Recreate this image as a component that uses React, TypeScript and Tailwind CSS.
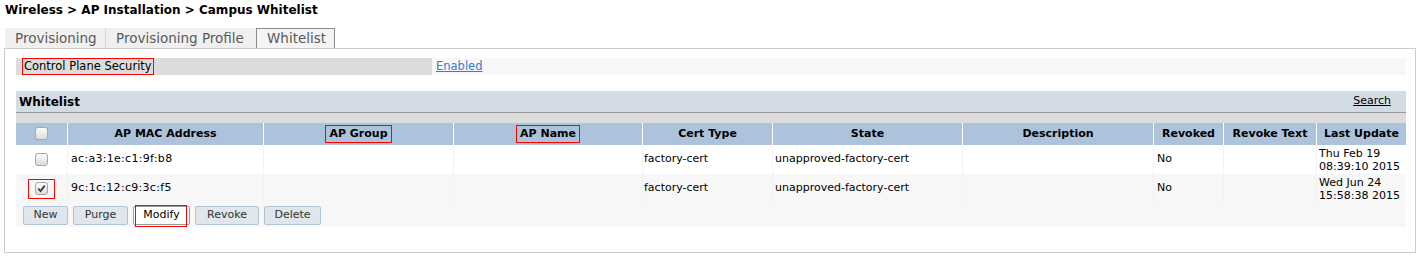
const FONT = { fontFamily: '"DejaVu Sans", Verdana, sans-serif' };

const COLS = [
  { label: "", w: 52 },
  { label: "AP MAC Address", w: 196 },
  { label: "AP Group", w: 190, boxed: true },
  { label: "AP Name", w: 189, boxed: true },
  { label: "Cert Type", w: 130 },
  { label: "State", w: 190 },
  { label: "Description", w: 191 },
  { label: "Revoked", w: 70 },
  { label: "Revoke Text", w: 93 },
  { label: "Last Update", w: 89 },
];

const ROWS = [
  { mac: "ac:a3:1e:c1:9f:b8", cert: "factory-cert", state: "unapproved-factory-cert", revoked: "No", date: ["Thu Feb 19", "08:39:10 2015"], checked: false },
  { mac: "9c:1c:12:c9:3c:f5", cert: "factory-cert", state: "unapproved-factory-cert", revoked: "No", date: ["Wed Jun 24", "15:58:38 2015"], checked: true },
];

function Checkbox({ checked }: { checked?: boolean }) {
  return (
    <span className="inline-flex h-[13px] w-[13px] items-center justify-center rounded-[3px] border border-[#a6a6a6] bg-gradient-to-b from-[#fbfbfb] to-[#dcdcdc] align-middle">
      {checked && (
        <svg viewBox="0 0 10 10" className="h-[9px] w-[9px]">
          <path d="M1.5 5.2 L4 7.8 L8.6 1.8" fill="none" stroke="#3c3c3c" strokeWidth="2" />
        </svg>
      )}
    </span>
  );
}

export default function App() {
  return (
    <div className="h-[257px] w-[1417px] bg-white text-[11px] text-black" style={FONT}>
      <div className="px-[5px] pt-[2px] text-[12px] font-bold leading-[16px]">
        Wireless &gt; AP Installation &gt; Campus Whitelist
      </div>

      {/* tabs */}
      <div className="mt-[10px] flex pl-[5px] text-[13.5px] leading-[19px] text-[#5a5a5a]">
        <div className="w-[101px] border-r border-[#d6d6d6] bg-[#f0f0f0] pl-[10px] pt-[1px]">Provisioning</div>
        <div className="w-[150px] bg-[#f0f0f0] pl-[10px] pt-[1px]">Provisioning Profile</div>
        <div className="w-[79px] border-x border-t border-[#8c8c8c] bg-[#f4f4f4] pl-[10px]">Whitelist</div>
      </div>

      {/* panel */}
      <div className="ml-[4px] h-[205px] w-[1412px] border border-[#cccccc] pl-[11px] pt-[9px]">
        <div className="flex h-[17px] w-[1390px] items-center bg-[#f7f7f7]">
          <div className="flex h-full w-[416px] items-center bg-[#dcdcdc] pl-[6px]">
            <span className="inline-block border border-solid border-[#ff0000] px-[1px] text-[11.5px] leading-[15px]">
              Control Plane Security
            </span>
          </div>
          <a className="ml-[4px] text-[11.5px] text-[#3b78d4] underline">Enabled</a>
        </div>

        <div className="mt-[16px] flex h-[22px] w-[1390px] items-center justify-between border-b border-[#999999] bg-[#d3dbe5] pl-[3px] pr-[15px]">
          <span className="text-[12px] font-bold">Whitelist</span>
          <a className="underline">Search</a>
        </div>
        <div className="h-[10px] w-[1390px] bg-[#dcdcdc]" />

        <table className="w-[1390px] table-fixed border-separate border-spacing-0">
          <colgroup>
            {COLS.map((c, i) => (
              <col key={i} style={{ width: c.w }} />
            ))}
          </colgroup>
          <thead>
            <tr className="h-[22px] bg-[#adc3dc]">
              {COLS.map((c, i) => (
                <th key={i} className="border-r border-white p-0 text-center align-middle font-bold last:border-r-0">
                  {i === 0 ? (
                    <Checkbox />
                  ) : c.boxed ? (
                    <span className="inline-block border border-solid border-[#ff0000] px-[3px] leading-[16px]">{c.label}</span>
                  ) : (
                    c.label
                  )}
                </th>
              ))}
            </tr>
          </thead>
          <tbody>
            {ROWS.map((r, ri) => (
              <tr key={ri} className={ri === 0 ? "h-[29px] bg-white" : "h-[29px] bg-[#f7f7f7]"}>
                <td className="border-r border-[#f2f2f2] p-0 text-center align-middle">
                  {r.checked ? (
                    <span className="inline-flex h-[20px] w-[27px] items-center justify-center border border-solid border-[#ff0000]">
                      <Checkbox checked />
                    </span>
                  ) : (
                    <Checkbox />
                  )}
                </td>
                <td className="border-r border-[#f2f2f2] py-0 pl-[3px] align-middle tracking-[0.3px]">{r.mac}</td>
                <td className="border-r border-[#f2f2f2]" />
                <td className="border-r border-[#f2f2f2]" />
                <td className="border-r border-[#f2f2f2] py-0 pl-[1px] align-middle">{r.cert}</td>
                <td className="border-r border-[#f2f2f2] py-0 pl-[2px] align-middle">{r.state}</td>
                <td className="border-r border-[#f2f2f2]" />
                <td className="border-r border-[#f2f2f2] py-0 pl-[3px] align-middle">{r.revoked}</td>
                <td className="border-r border-[#f2f2f2]" />
                <td className={ri === 0 ? "py-0 pl-[2px] align-middle leading-[13px]" : "py-0 pl-[2px] pt-[2px] align-top leading-[13px]"}>
                  {r.date[0]}
                  <br />
                  {r.date[1]}
                </td>
              </tr>
            ))}
          </tbody>
        </table>

        <div className="flex h-[24px] w-[1390px] items-center gap-[5px] bg-[#f7f7f7] pl-[7px] text-[#333]">
          <button className="h-[19px] w-[45px] rounded-[2px] border border-[#b3c4d6] bg-[#dfe6ec]">New</button>
          <button className="h-[19px] w-[55px] rounded-[2px] border border-[#b3c4d6] bg-[#dfe6ec]">Purge</button>
          <div className="relative">
            <button className="h-[19px] w-[57px] rounded-[2px] border border-[#9a9a9a] bg-white text-black">Modify</button>
            {/* annotation box */}
            <span className="pointer-events-none absolute left-[2px] top-[-1px] h-[22px] w-[52px] border border-solid border-[#ff0000]" />
          </div>
          <button className="h-[19px] w-[64px] rounded-[2px] border border-[#b3c4d6] bg-[#dfe6ec]">Revoke</button>
          <button className="h-[19px] w-[57px] rounded-[2px] border border-[#b3c4d6] bg-[#dfe6ec]">Delete</button>
        </div>
      </div>
    </div>
  );
}
